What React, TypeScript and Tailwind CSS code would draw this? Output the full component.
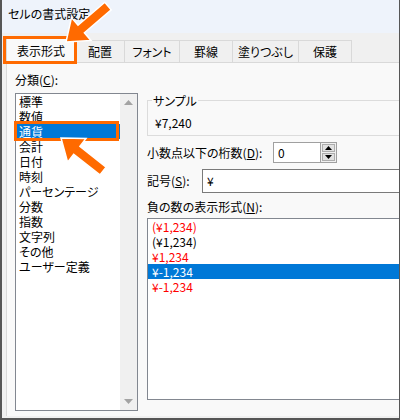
import React from "react";

const categories = [
  "標準",
  "数値",
  "通貨",
  "会計",
  "日付",
  "時刻",
  "パーセンテージ",
  "分数",
  "指数",
  "文字列",
  "その他",
  "ユーザー定義",
];

const negatives = [
  { text: "(¥1,234)", color: "text-[#ff0000]" },
  { text: "(¥1,234)", color: "text-black" },
  { text: "¥1,234", color: "text-[#ff0000]" },
  { text: "¥-1,234", color: "text-white", selected: true },
  { text: "¥-1,234", color: "text-[#ff0000]" },
];

const tabs = [
  { label: "配置", w: "w-[49px]" },
  { label: "フォント", w: "w-[55px]" },
  { label: "罫線", w: "w-[53px]" },
  { label: "塗りつぶし", w: "w-[66px]" },
  { label: "保護", w: "w-[53px]" },
];

function Tri({ down }: { down?: boolean }) {
  return (
    <svg width="9" height="5" viewBox="0 0 9 5" className="block">
      <polygon points={down ? "0,0 9,0 4.5,5" : "0,5 9,5 4.5,0"} fill="currentColor" />
    </svg>
  );
}

export default function App() {
  return (
    <div className="relative w-[400px] h-[420px] overflow-hidden flex flex-col bg-[#f0f0f0] border-l-2 border-r border-b-2 border-[#565656] font-['Noto_Sans_CJK_JP','Noto_Sans_CJK_SC',sans-serif] text-[12px] text-black [font-feature-settings:'palt']">
      {/* title bar */}
      <div className="h-[33px] shrink-0 bg-[#eef3fb] flex items-center pl-[6px] pb-[6px] leading-none">
        セルの書式設定
      </div>

      {/* tabs */}
      <div className="h-[29px] shrink-0 flex items-end pl-[4px]">
        <div className="relative z-10 -mb-px h-[26px] w-[70px] flex items-center justify-center bg-[#f9f9f9] border-t border-l border-r border-[#d9d9d9]">
          表示形式
        </div>
        {tabs.map((t) => (
          <div
            key={t.label}
            className={`h-[22px] ${t.w} flex items-center justify-center bg-[#f0f0f0] border-t border-r border-[#d9d9d9]`}
          >
            {t.label}
          </div>
        ))}
      </div>

      {/* panel */}
      <div className="flex-1 ml-[4px] mb-[2px] flex items-start bg-[#f9f9f9] border-t border-l border-[#d9d9d9] overflow-hidden">
        {/* left column */}
        <div className="shrink-0 pl-[8px] pt-[9px] flex flex-col">
          <div className="leading-[15px]">
            分類(<u>C</u>):
          </div>
          <div className="mt-[6px] w-[123px] h-[318px] flex bg-white border border-[#828790]">
            <div className="flex-1 flex flex-col">
              {categories.map((c) => (
                <div
                  key={c}
                  className={`h-[15px] leading-[15px] pl-[3px] whitespace-nowrap ${
                    c === "通貨" ? "bg-[#0078d7] text-white" : ""
                  }`}
                >
                  {c}
                </div>
              ))}
            </div>
            <div className="w-[17px] bg-[#f0f0f0] flex flex-col items-center justify-between py-[6px] text-[#a3a3a3]">
              <Tri />
              <Tri down />
            </div>
          </div>
        </div>

        {/* right column */}
        <div className="ml-[9px] w-[270px] shrink-0 pt-[30px] flex flex-col">
          <fieldset className="border border-[#dcdcdc] pb-[5px]">
            <legend className="ml-[4px] px-[1px] leading-[15px]">サンプル</legend>
            <div className="mt-[7px] pl-[7px] leading-[15px]">¥7,240</div>
          </fieldset>

          <div className="mt-[6px] h-[21px] flex items-center">
            <div className="w-[126px] shrink-0 whitespace-nowrap">
              小数点以下の桁数(<u>D</u>):
            </div>
            <div className="w-[48px] h-[21px] bg-white border border-[#a0a0a0] flex items-center pl-[4px]">
              0
            </div>
            <div className="w-[16px] h-[21px] flex flex-col border border-l-0 border-[#a0a0a0] bg-[#f0f0f0] p-px gap-px">
              <div className="flex-1 flex items-center justify-center bg-[#e1e1e1] border border-[#adadad] text-black">
                <svg width="7" height="4" viewBox="0 0 7 4">
                  <polygon points="0,4 7,4 3.5,0" fill="currentColor" />
                </svg>
              </div>
              <div className="flex-1 flex items-center justify-center bg-[#e1e1e1] border border-[#adadad] text-black">
                <svg width="7" height="4" viewBox="0 0 7 4">
                  <polygon points="0,0 7,0 3.5,4" fill="currentColor" />
                </svg>
              </div>
            </div>
          </div>

          <div className="mt-[6px] h-[24px] flex items-center">
            <div className="w-[55px] shrink-0 whitespace-nowrap">
              記号(<u>S</u>):
            </div>
            <div className="flex-1 h-[24px] bg-white border border-[#7a7a7a] flex items-center pl-[4px]">
              ¥
            </div>
          </div>

          <div className="mt-[6px] leading-[15px] whitespace-nowrap">
            負の数の表示形式(<u>N</u>):
          </div>
          <div className="mt-[4px] h-[182px] bg-white border border-[#828790] flex flex-col">
            {negatives.map((n, i) => (
              <div
                key={i}
                className={`h-[15px] leading-[15px] pl-[4px] ${n.color} ${
                  n.selected ? "bg-[#0078d7]" : ""
                }`}
              >
                {n.text}
              </div>
            ))}
          </div>
        </div>
      </div>

      {/* annotation boxes */}
      <div className="absolute left-[1px] top-[36px] w-[74px] h-[28px] border-[3px] border-[#ff6a00] z-20" />
      <div className="absolute left-[12px] top-[121px] w-[105px] h-[20px] border-[3px] border-[#ff6a00] z-20" />

      {/* arrows */}
      <svg
        className="absolute -left-[2px] top-0 z-30 pointer-events-none"
        width="400"
        height="420"
        viewBox="0 0 400 420"
      >
        <polygon
          points="66,42 90.9,40.4 84.4,32.8 111.2,9.8 104.8,2.2 78,25.2 71.5,17.6"
          fill="#ff6a00"
          stroke="#ffffff"
          strokeWidth="1.5"
          strokeLinejoin="miter"
        />
        <polygon
          points="61,138 86,138.5 79.9,146.4 106.1,167.1 99.9,174.9 73.7,154.2 67.6,162.1"
          fill="#ff6a00"
          stroke="#ffffff"
          strokeWidth="1.5"
          strokeLinejoin="miter"
        />
      </svg>
    </div>
  );
}
